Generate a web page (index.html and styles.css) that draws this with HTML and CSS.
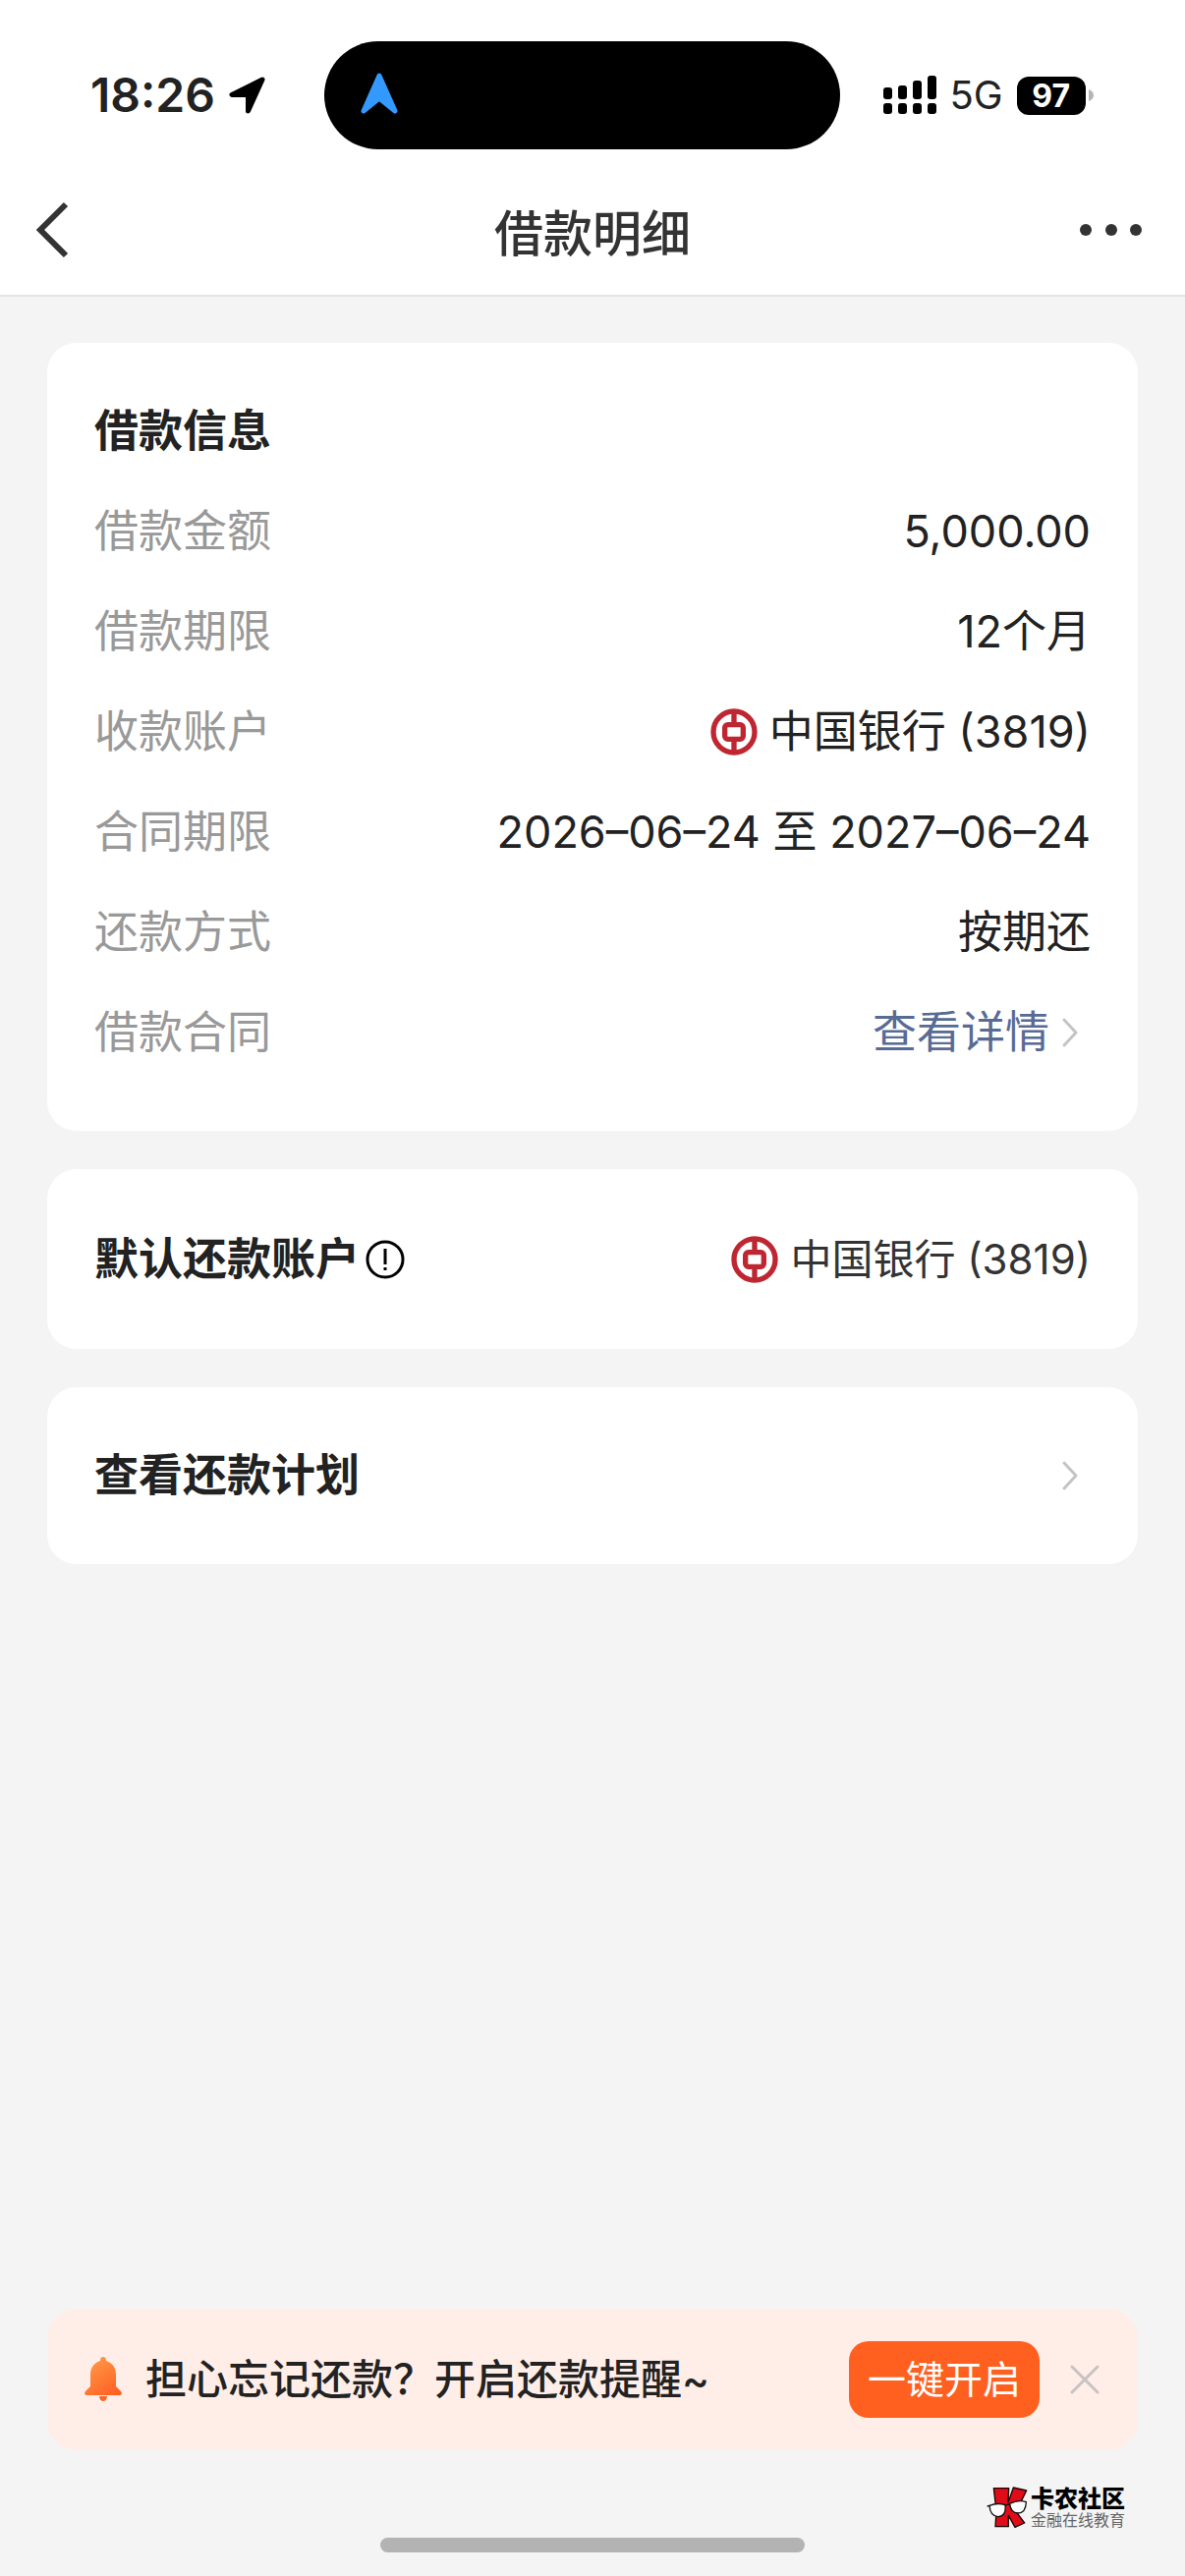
FILE: index.html
```html
<!DOCTYPE html>
<html lang="zh-CN">

<head>
  <meta charset="UTF-8">
  <meta name="viewport" content="width=device-width, initial-scale=1.0">
  <title>借款明细</title>
  <link rel="stylesheet" href="styles.css">
</head>

<body>
  <!-- shared icons -->
  <svg class="sprite" aria-hidden="true">
    <symbol id="icon-boc" viewBox="0 0 144 144">
      <g fill="none" stroke="#be2731" stroke-width="16">
        <circle cx="72" cy="72" r="63" />
        <rect x="44" y="50" width="56" height="44" rx="9" />
        <path d="M72 8v43M72 93v43" />
      </g>
    </symbol>
    <symbol id="icon-arrow" viewBox="0 0 18 32">
      <path d="M3 3l12 13L3 29" fill="none" stroke="#c4c4c4" stroke-width="3" stroke-linecap="round" stroke-linejoin="round" />
    </symbol>
  </svg>

  <header class="top">
    <div class="status-bar">
      <div class="status-left">
        <span class="time">18:26</span>
        <svg class="location" viewBox="0 0 38 38">
          <path d="M34 3L3 18.500H19.500V35z" stroke="#000" stroke-width="5" stroke-linejoin="round" />
        </svg>
      </div>
      <div class="island">
        <svg class="nav-arrow" viewBox="0 0 38 42">
          <path d="M19 3L3 39l16-13 16 13z" fill="#3399ff" stroke="#3399ff" stroke-width="5" stroke-linejoin="round" />
        </svg>
      </div>
      <div class="status-right">
        <svg class="signal" viewBox="0 0 54 40">
          <rect x="0" y="12" width="9" height="12" rx="3" />
          <rect x="15" y="10" width="9" height="14" rx="3" />
          <rect x="30" y="5" width="9" height="19" rx="3" />
          <rect x="45" y="0" width="9" height="24" rx="3" />
          <rect x="0" y="28" width="9" height="11" rx="3" />
          <rect x="15" y="28" width="9" height="11" rx="3" />
          <rect x="30" y="28" width="9" height="11" rx="3" />
          <rect x="45" y="28" width="9" height="11" rx="3" />
        </svg>
        <span class="network">5G</span>
        <span class="battery">97</span>
        <svg class="battery-tip" viewBox="0 0 5 14">
          <path d="M0 1q5 2 5 6t-5 6z" fill="#b5b5b5" />
        </svg>
      </div>
    </div>

    <nav class="nav-bar">
      <button class="icon-button" aria-label="返回">
        <svg width="36" height="58" viewBox="0 0 36 58">
          <path d="M31 3L5 29l26 26" fill="none" stroke="#333" stroke-width="6" />
        </svg>
      </button>
      <h1>借款明细</h1>
      <button class="icon-button more" aria-label="更多">
        <svg width="72" height="14" viewBox="0 0 72 14" fill="#333">
          <circle cx="7" cy="7" r="6" />
          <circle cx="33" cy="7" r="6" />
          <circle cx="58" cy="7" r="6" />
        </svg>
      </button>
    </nav>
  </header>

  <main>
    <section class="card loan-info">
      <h2>借款信息</h2>
      <dl>
        <div class="row">
          <dt>借款金额</dt>
          <dd>5,000.00</dd>
        </div>
        <div class="row">
          <dt>借款期限</dt>
          <dd>12个月</dd>
        </div>
        <div class="row">
          <dt>收款账户</dt>
          <dd class="bank"><svg class="bank-logo"><use href="#icon-boc" /></svg>中国银行 (3819)</dd>
        </div>
        <div class="row">
          <dt>合同期限</dt>
          <dd>2026–06–24 至 2027–06–24</dd>
        </div>
        <div class="row">
          <dt>还款方式</dt>
          <dd>按期还</dd>
        </div>
        <div class="row">
          <dt>借款合同</dt>
          <dd><a class="detail-link" href="#">查看详情<svg class="arrow"><use href="#icon-arrow" /></svg></a></dd>
        </div>
      </dl>
    </section>

    <section class="card account">
      <h2>默认还款账户</h2>
      <button class="icon-button hint" aria-label="说明">
        <svg width="40" height="40" viewBox="0 0 40 40">
          <circle cx="20" cy="20" r="18" fill="none" stroke="#000" stroke-width="3" />
          <path d="M20 9v16M20 28v3" stroke="#000" stroke-width="3" />
        </svg>
      </button>
      <p class="bank"><svg class="bank-logo"><use href="#icon-boc" /></svg>中国银行 (3819)</p>
    </section>

    <a class="card plan" href="#">
      <h2>查看还款计划</h2>
      <svg class="arrow"><use href="#icon-arrow" /></svg>
    </a>
  </main>

  <footer>
    <div class="reminder">
      <svg class="bell" viewBox="0 0 38 46">
        <defs>
          <linearGradient id="bellFill" x1="0" y1="0" x2="0.6" y2="1">
            <stop offset="0" stop-color="#ffa04d" />
            <stop offset="1" stop-color="#ff5f22" />
          </linearGradient>
        </defs>
        <path fill="url(#bellFill)" d="M19 0c2 0 3 1 3 4 7 2 10 8 10 14v12l4 4c4 4 1 5-2 5H4c-3 0-6-1-2-5l4-4V18C6 12 9 6 16 4c0-3 1-4 3-4zM15 40h8c0 3-2 5-4 5s-4-2-4-5z" />
      </svg>
      <p>担心忘记还款？开启还款提醒~</p>
      <button class="open-button">一键开启</button>
      <button class="icon-button" aria-label="关闭">
        <svg width="32" height="32" viewBox="0 0 32 32">
          <path d="M3 3l26 26M29 3L3 29" stroke="#c8c2c0" stroke-width="3" stroke-linecap="round" />
        </svg>
      </button>
    </div>
    <div class="home-indicator"></div>
  </footer>

  <!-- community watermark -->
  <div class="watermark">
    <svg width="42" height="42" viewBox="0 0 126 126">
      <g fill="#e00d18" stroke="#180404" stroke-width="4" stroke-linejoin="round">
        <path d="M22 5h46l-2 44L82 3l40 9-23 47-13 12 30 40-29 13-20-36v34H27l3-48z" />
      </g>
      <g fill="#fff" stroke="#111" stroke-width="4">
        <path d="M9 58q24-10 48-2 4 34-22 36Q11 90 9 58z" />
        <path d="M71 52q26-13 50-5-1 33-25 34-22 0-25-29z" />
        <path d="M2 60l8-2M57 59q8-8 14-3" fill="none" />
      </g>
    </svg>
    <div>
      <strong>卡农社区</strong>
      <span>金融在线教育</span>
    </div>
  </div>
</body>

</html>
```

FILE: styles.css
```css
* {
  box-sizing: border-box;
}

body {
  margin: 0;
  min-height: 100vh;
  display: flex;
  flex-direction: column;
  position: relative;
  background-color: #f4f4f4;
  color: #222;
  font-family: Inter, 'Noto Sans CJK SC', sans-serif;
  font-size: 45px;
  line-height: 60px;
}

h1,
h2,
p,
dl,
dd {
  margin: 0;
}

svg {
  display: block;
  flex-shrink: 0;
}

a {
  color: inherit;
  text-decoration: none;
}

button {
  border: none;
  padding: 0;
  font-family: inherit;
  cursor: pointer;
}

.sprite {
  position: absolute;
  width: 0;
  height: 0;
}

.icon-button {
  background: none;
}

/* header */
.top {
  background-color: #fff;
  border-bottom: 2px solid #e5e5e5;
}

.status-bar {
  display: grid;
  grid-template-columns: 1fr 525px 1fr;
  align-items: center;
  height: 168px;
  padding: 26px 22px 0 0;
}

.status-left {
  display: flex;
  align-items: center;
  gap: 14px;
  padding-left: 92px;
}

.time {
  font-size: 48px;
  font-weight: 600;
}

.location {
  width: 38px;
  height: 38px;
}

.island {
  height: 110px;
  padding: 32px 37px;
  border-radius: 55px;
  background-color: #000;
}

.nav-arrow {
  width: 38px;
  height: 42px;
}

.status-right {
  display: flex;
  align-items: center;
  padding-left: 44px;
}

.signal {
  width: 54px;
  height: 40px;
}

.network {
  margin: 0 14px;
  font-size: 40px;
}

.battery {
  width: 70px;
  border-radius: 12px;
  background-color: #000;
  color: #fff;
  font-size: 32px;
  font-weight: 700;
  line-height: 39px;
  text-align: center;
}

.battery-tip {
  width: 5px;
  height: 14px;
  margin-left: 3px;
}

.nav-bar {
  display: grid;
  grid-template-columns: 1fr auto 1fr;
  align-items: center;
  height: 132px;
  padding: 0 36px;
}

.nav-bar h1 {
  color: #333;
  font-size: 50px;
  font-weight: 500;
  line-height: normal;
}

.nav-bar .more {
  justify-self: end;
}

/* cards */
main {
  flex: 1;
  display: flex;
  flex-direction: column;
  gap: 39px;
  padding: 47px 48px;
}

.card {
  padding: 0 48px;
  border-radius: 30px;
  background-color: #fff;
}

.card h2 {
  font-size: 45px;
  font-weight: 600;
}

.loan-info {
  padding-top: 39px;
  padding-bottom: 49px;
  line-height: 102px;
}

.row {
  display: flex;
  justify-content: space-between;
}

.row dt {
  color: #999;
}

.bank {
  display: flex;
  align-items: center;
}

.bank-logo {
  width: 48px;
  height: 48px;
  margin-right: 12px;
}

.detail-link {
  display: flex;
  align-items: center;
  color: #576b95;
}

.arrow {
  width: 18px;
  height: 32px;
  margin: 0 12px;
}

.account {
  display: flex;
  align-items: center;
  height: 183px;
}

.hint {
  margin-left: 6px;
}

.account .bank {
  margin-left: auto;
  color: #333;
  font-size: 42px;
}

.plan {
  display: flex;
  align-items: center;
  justify-content: space-between;
  height: 180px;
}

/* bottom reminder */
footer {
  padding: 0 48px 24px;
}

.reminder {
  display: flex;
  align-items: center;
  height: 144px;
  padding: 0 38px;
  border-radius: 30px;
  background-color: #ffeee8;
}

.bell {
  width: 38px;
  height: 46px;
}

.reminder p {
  flex: 1;
  margin-left: 24px;
  font-size: 42px;
  font-weight: 500;
}

.open-button {
  height: 78px;
  margin-right: 30px;
  padding: 0 19px;
  border-radius: 20px;
  background-color: #ff5f1f;
  color: #fff;
  font-size: 39px;
  line-height: 60px;
}

.home-indicator {
  width: 432px;
  height: 15px;
  margin: 89px auto 0;
  border-radius: 8px;
  background-color: #b3b3b3;
}

.watermark {
  position: absolute;
  right: 61px;
  bottom: 49px;
  display: flex;
  align-items: center;
  gap: 3px;
}

.watermark strong {
  display: block;
  color: #000;
  font-size: 24px;
  font-weight: 900;
  line-height: 26px;
}

.watermark span {
  display: block;
  color: #666;
  font-size: 16px;
  line-height: 16px;
}
```
